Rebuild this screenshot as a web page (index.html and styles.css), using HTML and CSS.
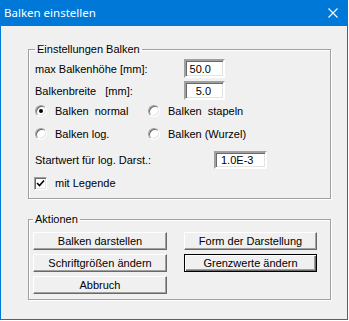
FILE: index.html
```html
<!DOCTYPE html>
<html lang="de">
<head>
  <meta charset="UTF-8" />
  <title>Balken einstellen</title>
  <link rel="stylesheet" href="styles.css">
</head>
<body>

  <div class="window">
    <div class="titlebar">
      <span class="title">Balken einstellen</span>
      <svg class="close" width="10" height="10" viewBox="0 0 10 10">
        <path d="M0.5 0.5 L9.5 9.5 M9.5 0.5 L0.5 9.5" stroke="#fff" stroke-width="1.1" fill="none" />
      </svg>
    </div>

    <div class="content">
      <!-- Einstellungen -->
      <fieldset class="group">
        <legend>Einstellungen Balken</legend>

        <div class="row r-input">
          <span class="lbl-wide">max Balkenhöhe [mm]:</span>
          <input class="field field-r" type="text" value="50.0" readonly />
        </div>
        <div class="row r-input second">
          <span class="lbl-wide pre">Balkenbreite   [mm]:</span>
          <input class="field field-r" type="text" value="5.0" readonly />
        </div>

        <div class="row r-radio first-radio">
          <label class="opt"><span class="radio on"></span><span class="pre">Balken  normal</span></label>
          <label class="opt"><span class="radio"></span><span class="pre">Balken  stapeln</span></label>
        </div>
        <div class="row r-radio">
          <label class="opt"><span class="radio"></span>Balken log.</label>
          <label class="opt"><span class="radio"></span>Balken (Wurzel)</label>
        </div>

        <div class="row r-start">
          <span class="lbl-start">Startwert für log. Darst.:</span>
          <input class="field field-l" type="text" value="1.0E-3" readonly />
        </div>

        <div class="row r-check">
          <label class="opt">
            <span class="check">
              <svg width="9" height="9" viewBox="0 0 9 9"><path d="M1 4 L3.5 6.5 L8 1.5" stroke="#000" stroke-width="1.6" fill="none" /></svg>
            </span>mit Legende
          </label>
        </div>
      </fieldset>

      <!-- Aktionen -->
      <fieldset class="group actions">
        <legend>Aktionen</legend>
        <div class="buttons">
          <button class="btn">Balken darstellen</button>
          <button class="btn">Form der Darstellung</button>
          <button class="btn">Schriftgrößen ändern</button>
          <button class="btn default">Grenzwerte ändern</button>
          <button class="btn">Abbruch</button>
        </div>
      </fieldset>
    </div>
  </div>

</body>
</html>
```

FILE: styles.css
```css
body {
  margin: 0;
  background: #fff;
  font-family: "Liberation Sans", Arial, sans-serif;
  font-size: 11px;
  color: #000;
}
.window {
  width: 348px;
  height: 320px;
  box-sizing: border-box;
  border: 1px solid #0078d7;
  border-top: none;
  background: #f0f0f0;
}
.titlebar {
  height: 26px;
  background: #0078d7;
  display: flex;
  align-items: center;
  justify-content: space-between;
  padding: 0 9px 0 3px;
}
.title {
  color: #fff;
  font-family: "Noto Sans", "Open Sans", sans-serif;
  font-size: 11.5px;
  line-height: 16px;
}
.content {
  padding-left: 27px;
}
.group {
  width: 303px;
  box-sizing: border-box;
  margin: 17px 0 0 0;
  padding: 3px 6px 8px 6px;
  border: 1px solid #a0a0a0;
  box-shadow: 1px 1px 0 #fff, inset 1px 1px 0 #fff;
}
.group legend {
  padding: 0 2px;
  line-height: 13px;
}
.row {
  display: flex;
  align-items: center;
}
.pre {
  white-space: pre;
}
.r-input {
  height: 19px;
}
.r-input.second {
  margin-top: 3px;
}
.lbl-wide {
  width: 149px;
}
.r-radio {
  height: 16px;
  margin-top: 7px;
}
.r-radio.first-radio {
  margin-top: 3px;
}
.opt {
  display: flex;
  align-items: center;
}
.r-radio .opt:first-child {
  width: 113px;
}
.radio {
  width: 12px;
  height: 12px;
  box-sizing: border-box;
  border-radius: 50%;
  border: 1px solid;
  border-color: #a0a0a0 #fff #fff #a0a0a0;
  box-shadow: inset 1px 1px 0 #696969, inset -1px -1px 0 #e3e3e3;
  background: #fff;
  margin-right: 8px;
  display: flex;
  align-items: center;
  justify-content: center;
}
.radio.on::after {
  content: "";
  width: 4px;
  height: 4px;
  border-radius: 50%;
  background: #000;
}
.r-start {
  height: 18px;
  margin-top: 9px;
}
.lbl-start {
  width: 179px;
}
.r-check {
  height: 14px;
  margin-top: 7px;
  margin-left: -1px;
}
.check {
  width: 13px;
  height: 13px;
  box-sizing: border-box;
  border: 1px solid;
  border-color: #a0a0a0 #fff #fff #a0a0a0;
  box-shadow: inset 1px 1px 0 #696969, inset -1px -1px 0 #e3e3e3;
  background: #fff;
  margin-right: 8px;
  display: flex;
  align-items: center;
  justify-content: center;
}
.field {
  box-sizing: border-box;
  margin: 0;
  font: inherit;
  color: #000;
  background: #fff;
  border: 2px solid;
  border-color: #a0a0a0 #fff #fff #a0a0a0;
  box-shadow: inset 1px 1px 0 #696969, inset -1px -1px 0 #e3e3e3;
  outline: none;
}
.field-r {
  width: 41px;
  height: 19px;
  text-align: right;
  padding: 0 12px 0 0;
}
.field-l {
  width: 53px;
  height: 18px;
  padding: 0 0 0 5px;
}
.actions {
  margin-top: 14px;
  padding: 6px 6px 5px 4px;
}
.buttons {
  display: grid;
  grid-template-columns: 134px 133px;
  column-gap: 17px;
  row-gap: 4px;
}
.btn {
  height: 18px;
  margin: 0;
  padding: 0;
  font: inherit;
  color: #000;
  background: #f0f0f0;
  border: 1px solid;
  border-color: #fff #696969 #696969 #fff;
  box-shadow: inset -1px -1px 0 #a0a0a0;
}
.btn.default {
  border: 1px solid #000;
  box-shadow: inset 1px 1px 0 #fff, inset -1px -1px 0 #696969, inset -2px -2px 0 #a0a0a0;
}
```
